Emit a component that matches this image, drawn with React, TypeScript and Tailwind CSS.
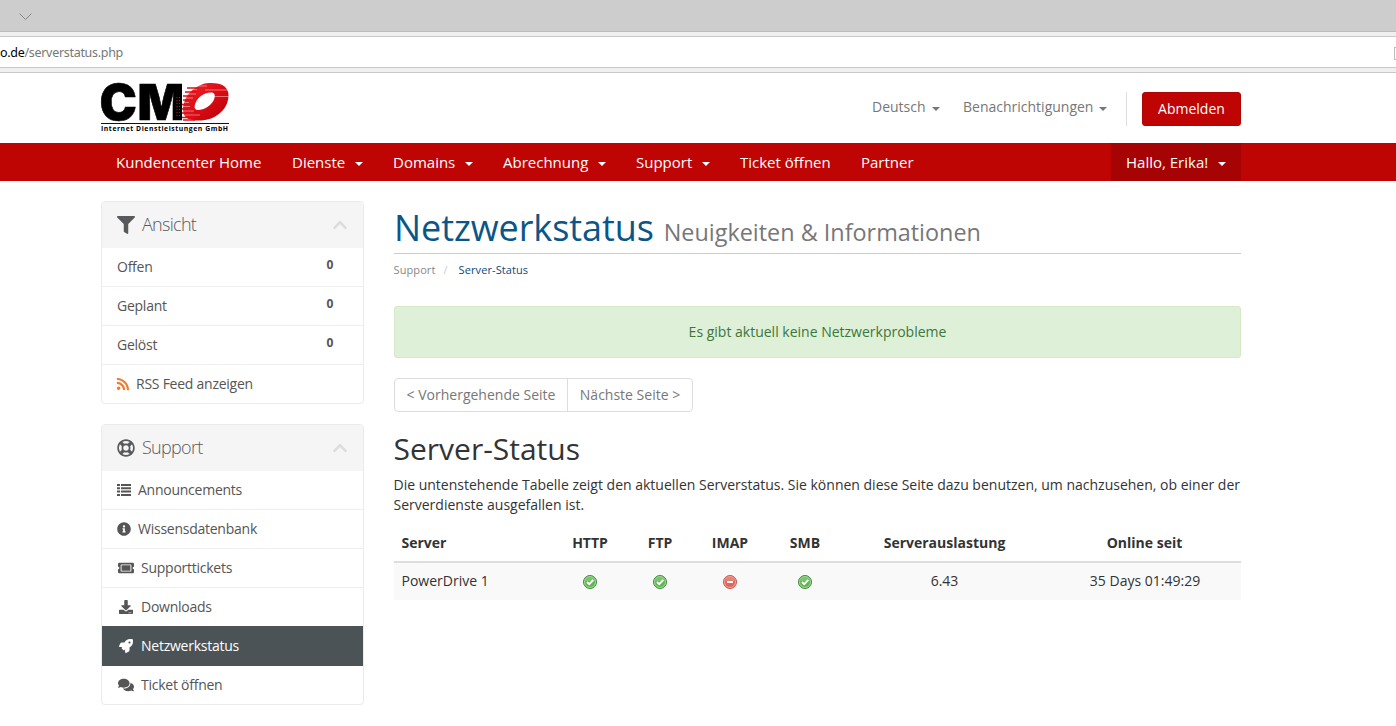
import React from "react";
import {
  FaChevronUp, FaComments, FaDownload, FaFilter, FaInfoCircle,
  FaRegLifeRing, FaRocket, FaRss, FaTicketAlt,
} from "react-icons/fa";

function ListIcon() {
  return (
    <svg width="14" height="12" viewBox="0 0 14 12" fill="currentColor">
      <path d="M0 0h3v2H0zM4 0h10v2H4zM0 3.300h3v2H0zM4 3.300h10v2H4zM0 6.600h3v2H0zM4 6.600h10v2H4zM0 10h3v2H0zM4 10h10v2H4z" />
    </svg>
  );
}

const views = ["Offen", "Geplant", "Gelöst"];

const supportLinks = [
  { label: "Announcements", icon: <ListIcon />, box: "w-[21px]" },
  { label: "Wissensdatenbank", icon: <FaInfoCircle size={14} />, box: "w-[21px]" },
  { label: "Supporttickets", icon: <FaTicketAlt size={16} />, box: "w-6 pl-px" },
  { label: "Downloads", icon: <FaDownload size={14} />, box: "w-6 pl-0.5" },
  { label: "Netzwerkstatus", icon: <FaRocket size={14} />, box: "w-6 pl-0.5", active: true },
  { label: "Ticket öffnen", icon: <FaComments size={16} />, box: "w-6 pl-px" },
];

const navLinks = [
  { label: "Kundencenter Home", width: "w-[176px]" },
  { label: "Dienste", width: "w-[101px]", caret: true },
  { label: "Domains", width: "w-[110px]", caret: true },
  { label: "Abrechnung", width: "w-[133px]", caret: true },
  { label: "Support", width: "w-[104px]", caret: true },
  { label: "Ticket öffnen", width: "w-[121px]" },
  { label: "Partner", width: "w-[83px]" },
];

function Caret() {
  return <span className="mt-[3px] h-0 w-0 border-x-4 border-t-4 border-x-transparent border-t-current" />;
}

function Logo() {
  return (
    <div className="w-32">
      <svg width="128" height="42" viewBox="0 0 128 42" className="block overflow-visible">
        <defs>
          <linearGradient id="ring" x1="0" y1="0" x2="1" y2="1">
            <stop offset="0" stopColor="#f0282c" />
            <stop offset="0.5" stopColor="#dc0c14" />
            <stop offset="1" stopColor="#b40008" />
          </linearGradient>
        </defs>
        <text y="38" fontSize="50" fontFamily="Inter, 'Liberation Sans', sans-serif" fontWeight="900" stroke="#000" strokeWidth="0.6">
          <tspan x="-1.5">C</tspan>
          <tspan x="36.500">M</tspan>
        </text>
        <path d="M81 0h48v40h-48z" fill="#fff" />
        <path
          d="M108 1C121 0.500 128 5 127.500 14C127 28 114 38.500 98 38.500C90 38.500 82 37 82 28C82 14 94 2 108 1ZM110 10.500C103 10.500 97 15 94.500 21C92.500 26 94 28.500 98 28C105 27.500 112 22 113.500 16C114.300 12 113 10.500 110 10.500Z"
          fill="url(#ring)"
          fillRule="evenodd"
        />
        <path d="M82 7.500h14M81 12h14M81 16h11M81 20.500h7M81 24.500h8M81 29h12M81 33h18M86 4h20M104 8h23M112 14.500h16" stroke="#fff" strokeWidth="0.6" opacity="0.7" />
        <path d="M86 6h12M84 10h12M82 14h12M82 18h9M81 22.500h8M81 27h12M81 31h12M81 35.500h12M82 38h12" stroke="#dc121a" strokeWidth="1.600" />
        <path d="M76 15v21M78.500 15v21" stroke="#c5161b" strokeDasharray="1 2" />
        <path d="M0 41.500h128" stroke="#111" strokeWidth="1" />
      </svg>
      <p className="w-32 text-[6.8px] leading-[9px] font-bold tracking-[0.57px] whitespace-nowrap text-black">
        Internet Dienstleistungen GmbH
      </p>
    </div>
  );
}

function PanelHeading({ icon, title }: { icon: React.ReactNode; title: string }) {
  return (
    <div className="flex h-[46px] items-center bg-[#f5f5f5] px-[15px] text-[#58595b]">
      {icon}
      <span className="-mt-0.5 ml-[7px] text-[18px] font-light tracking-[-0.7px]">{title}</span>
      <FaChevronUp size={16} className="ml-auto text-[#dcdcdc]" />
    </div>
  );
}

function Sidebar() {
  return (
    <aside className="flex w-[263px] flex-col gap-5 tracking-[-0.25px]">
      <div className="overflow-hidden rounded border border-[#ebebeb]">
        <PanelHeading icon={<FaFilter size={18} />} title="Ansicht" />
        {views.map((view) => (
          <div key={view} className="flex h-[39px] justify-between border-b border-[#eee] pr-[30px] pl-[15px] leading-[38px]">
            <span>{view}</span>
            <span className="text-xs leading-[34px] font-bold">0</span>
          </div>
        ))}
        <div className="flex h-[38px] items-center pl-3.5">
          <FaRss size={14} className="text-[#ee7b30]" />
          <span className="ml-1.5">RSS Feed anzeigen</span>
        </div>
      </div>

      <div className="overflow-hidden rounded border border-[#ebebeb]">
        <PanelHeading icon={<FaRegLifeRing size={18} />} title="Support" />
        {supportLinks.map((link) => (
          <div
            key={link.label}
            className={
              link.active
                ? "-mt-px flex h-10 items-center bg-[#4b5356] pl-[15px] text-white"
                : "flex h-[39px] items-center border-b border-[#eee] pl-[15px] last:h-[38px] last:border-b-0"
            }
          >
            <span className={link.box}>{link.icon}</span>
            <span>{link.label}</span>
          </div>
        ))}
      </div>
    </aside>
  );
}

function StatusIcon({ up }: { up: boolean }) {
  return (
    <svg width="14" height="14" viewBox="0 0 14 14" className="mx-auto">
      <circle cx="7" cy="7" r="6.500" fill={up ? "#5fb653" : "#e0665a"} stroke={up ? "#3f8b3f" : "#c9584e"} />
      <circle cx="7" cy="7" r="5.500" fill="none" stroke={up ? "#a6dc98" : "#f3aaa0"} strokeWidth="0.9" />
      <path d="M2.500 6A4.500 4 0 0 1 11.500 6Z" fill="#fff" opacity="0.18" />
      {up
        ? <path d="M4 7l2.200 2.200L10.300 5" fill="none" stroke="#fff" strokeWidth="1.800" />
        : <path d="M4 7h6" stroke="#fff" strokeWidth="2" />}
    </svg>
  );
}

function ServerTable() {
  return (
    <table className="mt-2 w-[847px] table-fixed text-center text-[#333]">
      <colgroup>
        <col className="w-[157px]" />
        <col className="w-[78px]" />
        <col className="w-[62px]" />
        <col className="w-[78px]" />
        <col className="w-[72px]" />
        <col className="w-[207px]" />
        <col className="w-[193px]" />
      </colgroup>
      <thead>
        <tr className="h-[39px] border-b-2 border-[#ddd] *:pt-0.5">
          <th className="pl-[7.5px] text-left">Server</th>
          <th>HTTP</th>
          <th>FTP</th>
          <th>IMAP</th>
          <th>SMB</th>
          <th>Serverauslastung</th>
          <th>Online seit</th>
        </tr>
      </thead>
      <tbody>
        <tr className="h-[38px] bg-[#f9f9f9]">
          <td className="pb-px pl-[7.5px] text-left">PowerDrive 1</td>
          <td><StatusIcon up={true} /></td>
          <td><StatusIcon up={true} /></td>
          <td><StatusIcon up={false} /></td>
          <td><StatusIcon up={true} /></td>
          <td className="pb-px">6.43</td>
          <td className="pb-px pl-px">35 Days 01:49:29</td>
        </tr>
      </tbody>
    </table>
  );
}

function App() {
  return (
    <div className="h-[726px] overflow-hidden bg-white font-['Open_Sans',sans-serif] text-sm leading-5 text-[#555]">
      <div className="h-8 border-b border-[#bcbcbc] bg-[#cdcdcd] pt-[13px] pl-[19px]">
        <svg width="13" height="8" viewBox="0 0 13 8" fill="none" stroke="#888">
          <path d="M0.500 0.500l6 6l6-6" />
        </svg>
      </div>
      <div className="h-[41px] border-b border-[#c8c8c8] bg-[#f0f0f0] py-1">
        <div className="flex h-8 items-center justify-between border-y border-[#c8c8c8] bg-white">
          <span className="pt-0.5 font-['Noto_Sans',sans-serif] text-[12.5px] tracking-[-0.3px] text-[#777]">
            <span className="text-black">o.de</span>/serverstatus.php
          </span>
          <span className="mt-0.5 h-[13px] w-0.5 border border-r-0 border-[#bbb]" />
        </div>
      </div>

      <header className="ml-[101px] flex h-[70px] w-[1140px] justify-between">
        <div className="pt-[9px]"><Logo /></div>
        <div className="flex pt-[19px] text-[#777]">
          <div className="mt-[5px] flex h-5 w-[91px] items-center gap-1.5"><span>Deutsch</span><Caret /></div>
          <div className="mt-[5px] flex h-5 w-[163px] items-center gap-1.5"><span>Benachrichtigungen</span><Caret /></div>
          <div className="h-[34px] w-4 border-l border-[#ddd]" />
          <button className="h-[34px] w-[99px] rounded-[3px] border border-[#ad0404] bg-[#bf0404] text-white">Abmelden</button>
        </div>
      </header>

      <nav className="h-[38px] bg-[#bf0404] pl-[101px] text-[15px] text-white">
        <div className="flex h-full w-[1140px]">
          {navLinks.map((link) => (
            <div key={link.label} className={`flex items-center justify-between px-[15px] whitespace-nowrap ${link.width}`}>
              <span>{link.label}</span>
              {link.caret && <Caret />}
            </div>
          ))}
          <div className="ml-auto flex w-[130px] items-center justify-between bg-[#a60404] px-[15px]">
            <span>Hallo, Erika!</span>
            <Caret />
          </div>
        </div>
      </nav>

      <div className="ml-[101px] flex gap-[30px] pt-5">
        <Sidebar />
        <main className="w-[847px]">
          <h1 className="flex h-[53px] items-baseline gap-2.5 border-b border-[#ccc] leading-[53px] whitespace-nowrap">
            <span className="text-[36px] tracking-[-0.08px] text-[#0b5688]">Netzwerkstatus</span>
            <small className="text-[23.4px] text-[#777]">Neuigkeiten &amp; Informationen</small>
          </h1>
          <div className="-ml-[0.5px] flex h-8 items-center text-[11px] text-[#888]">
            <span className="tracking-[0.1px]">Support</span>
            <span className="ml-2 text-[#ccc]">/</span>
            <span className="ml-[11px] tracking-[0.1px] text-[#0b4a78]">Server-Status</span>
          </div>
          <div className="mt-5 flex h-[52px] items-center justify-center rounded-[3px] border border-[#d6e9c6] bg-[#dff0d8] text-[#3c763d]">
            Es gibt aktuell keine Netzwerkprobleme
          </div>
          <div className="mt-5 flex h-[34px] w-[299px] rounded border border-[#ddd] text-center leading-8 text-[#777]">
            <span className="w-[173px] border-r border-[#ddd]">&lt; Vorhergehende Seite</span>
            <span className="flex-1">Nächste Seite &gt;</span>
          </div>
          <h2 className="mt-5 -ml-[0.5px] h-[33px] text-[30px] leading-[33px] text-[#333]">Server-Status</h2>
          <p className="mt-2.5 -ml-[0.5px] whitespace-nowrap text-[#333]">
            Die untenstehende Tabelle zeigt den aktuellen Serverstatus. Sie können diese Seite dazu benutzen, um nachzusehen, ob einer der<br />
            Serverdienste ausgefallen ist.
          </p>
          <ServerTable />
        </main>
      </div>
    </div>
  );
}

export default App;
